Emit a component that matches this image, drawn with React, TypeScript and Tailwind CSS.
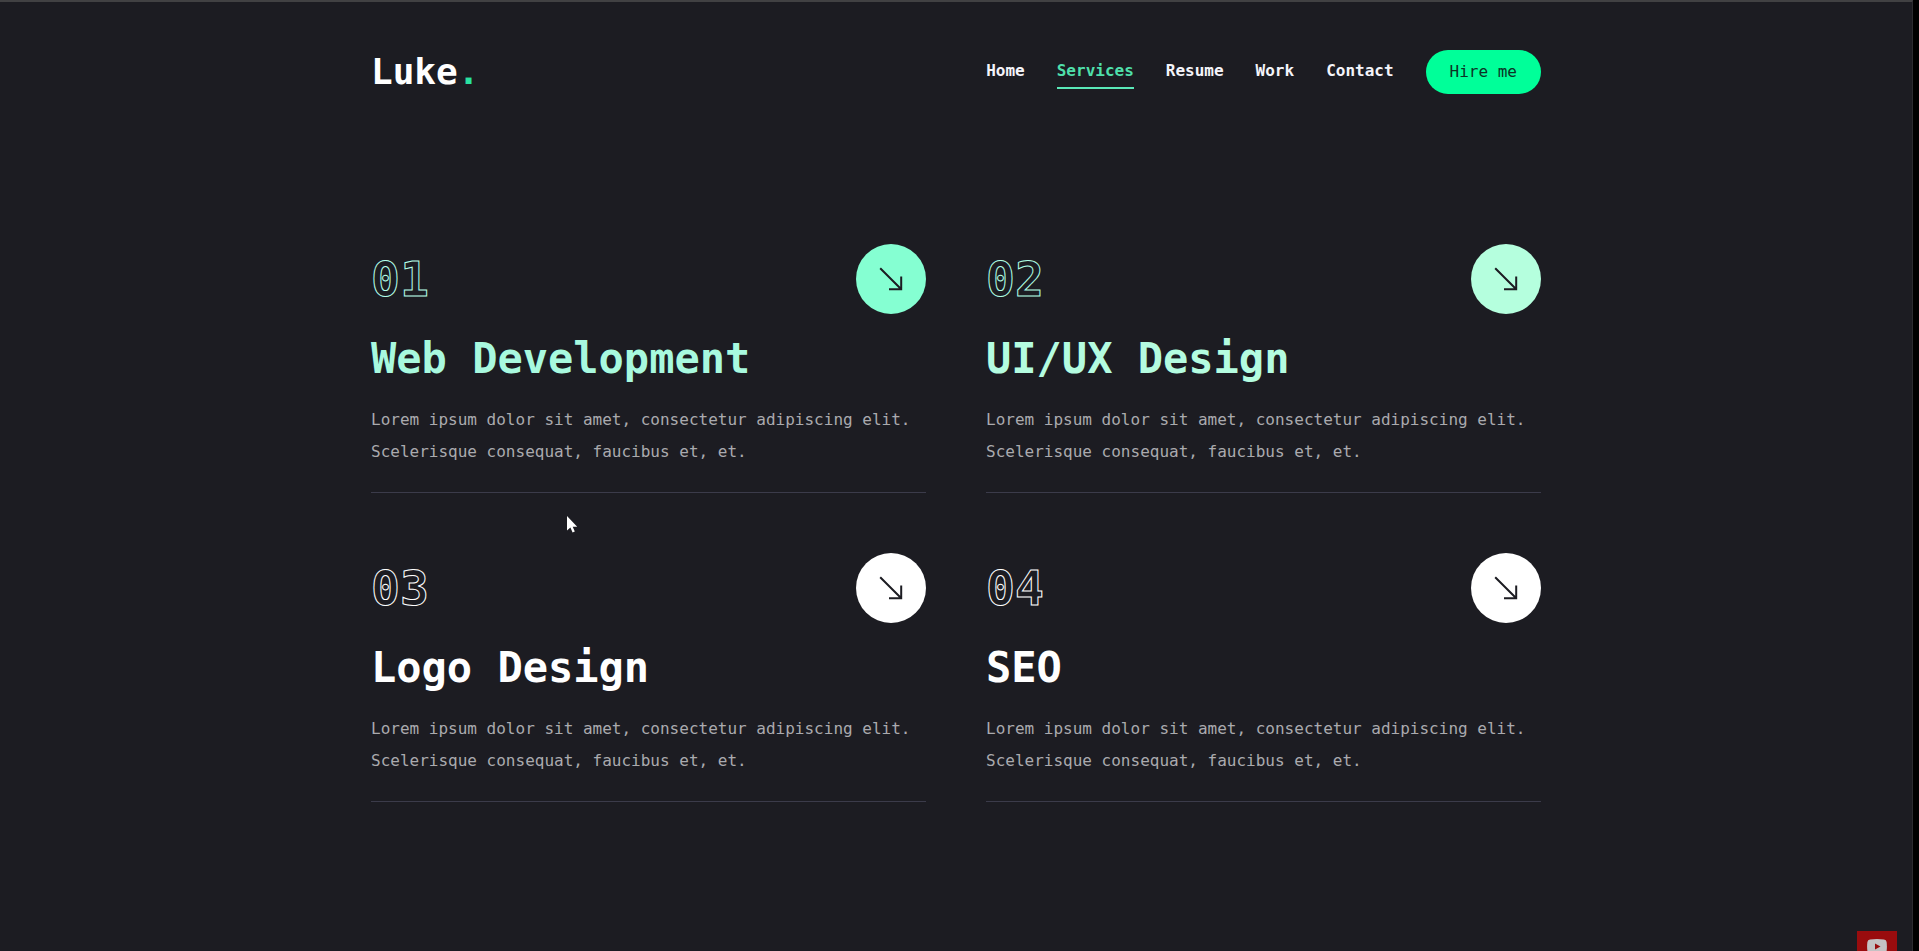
type Tone = "hovered" | "fading" | "idle";

interface Service {
  num: string;
  title: string;
  tone: Tone;
}

const links = ["Home", "Services", "Resume", "Work", "Contact"];

const services: Service[] = [
  { num: "01", title: "Web Development", tone: "hovered" },
  { num: "02", title: "UI/UX Design", tone: "fading" },
  { num: "03", title: "Logo Design", tone: "idle" },
  { num: "04", title: "SEO", tone: "idle" },
];

const numTone: Record<Tone, string> = {
  hovered: "[-webkit-text-stroke-color:#b4ffea]",
  fading: "[-webkit-text-stroke-color:#b0ffe4]",
  idle: "[-webkit-text-stroke-color:#ffffff]",
};

const titleTone: Record<Tone, string> = {
  hovered: "text-[#a8f9df]",
  fading: "text-[#b4fce0]",
  idle: "text-white",
};

const circleTone: Record<Tone, string> = {
  hovered: "bg-[#85ffd2]",
  fading: "bg-[#b5ffde]",
  idle: "bg-white",
};

function Arrow() {
  return (
    <svg width="24" height="24" viewBox="0 0 24 24" fill="none" stroke="#1c1c22" strokeWidth="2" aria-hidden="true">
      <path d="M1.200 1.200 L22 22 M22.200 9.500 V22.200 H10" />
    </svg>
  );
}

function ServiceCard({ num, title, tone }: Service) {
  return (
    <article className="flex flex-col gap-6 border-b border-[#3b3b4a]">
      <div className="flex items-center justify-between">
        <span
          className={`text-5xl leading-none font-bold text-transparent [-webkit-text-stroke-width:1px] ${numTone[tone]}`}
        >
          {num}
        </span>
        <a
          href="#details"
          aria-label={`${title} details`}
          className={`flex size-[70px] items-center justify-center rounded-full ${circleTone[tone]}`}
        >
          <Arrow />
        </a>
      </div>
      <h2 className={`text-[42px] leading-none font-bold ${titleTone[tone]}`}>{title}</h2>
      <p className="mb-6 text-base leading-8 text-[#aaaaae]">
        Lorem ipsum dolor sit amet, consectetur adipiscing elit. Scelerisque consequat, faucibus et, et.
      </p>
    </article>
  );
}

export default function App() {
  return (
    <div className="bg-black pr-1.5">
      <div className="relative h-screen overflow-hidden border-t-2 border-r border-t-[#414143] border-r-[#2c2c30] bg-[#1c1c22] font-['DejaVu_Sans_Mono','Liberation_Mono',monospace] text-white">
        <header className="mx-auto flex max-w-[1202px] items-center justify-between px-4 pt-12">
          <a href="#home" className="text-4xl leading-10 font-bold">
            Luke<span className="text-[#2ae2a0]">.</span>
          </a>
          <nav className="flex items-center gap-8">
            {links.map((label) => (
              <a
                key={label}
                href={`#${label.toLowerCase()}`}
                className={`border-b-2 text-base leading-8 font-bold ${
                  label === "Services" ? "border-[#5ae8b8] text-[#4fdfaa]" : "border-transparent text-[#f4f4fa]"
                }`}
              >
                {label}
              </a>
            ))}
            <button type="button" className="h-11 rounded-full bg-[#00ff99] px-6 text-base text-[#0c3326]">
              Hire me
            </button>
          </nav>
        </header>

        <main className="mx-auto grid max-w-[1202px] grid-cols-1 gap-[60px] px-4 pt-[150px] lg:grid-cols-2">
          {services.map((service) => (
            <ServiceCard key={service.num} {...service} />
          ))}
        </main>

        <svg
          className="absolute top-[513px] left-[566px]"
          width="12"
          height="19"
          viewBox="0 0 12 19"
          aria-hidden="true"
        >
          <path d="M1 1 V15.500 L4.400 12.500 L6.600 17.600 L8.800 16.600 L6.700 11.700 H11.200 Z" fill="#fff" />
        </svg>

        <a
          href="#youtube"
          aria-label="YouTube"
          className="absolute right-[15px] -bottom-5 flex size-10 items-start justify-center bg-[#990c0e] pt-2"
        >
          <svg width="20" height="15" viewBox="0 0 20 15" aria-hidden="true">
            <path
              d="M3 .5 Q10 -.3 17 .5 Q19.300 .8 19.600 3 Q20.200 7.500 19.600 12 Q19.300 14.200 17 14.500 Q10 15.300 3 14.500 Q.7 14.200 .4 12 Q-.2 7.500 .4 3 Q.7 .8 3 .5 Z"
              fill="#c4c2c4"
            />
            <path d="M8 4.500 L13.500 7.500 L8 10.500 Z" fill="#990c0e" />
          </svg>
        </a>
      </div>
    </div>
  );
}
